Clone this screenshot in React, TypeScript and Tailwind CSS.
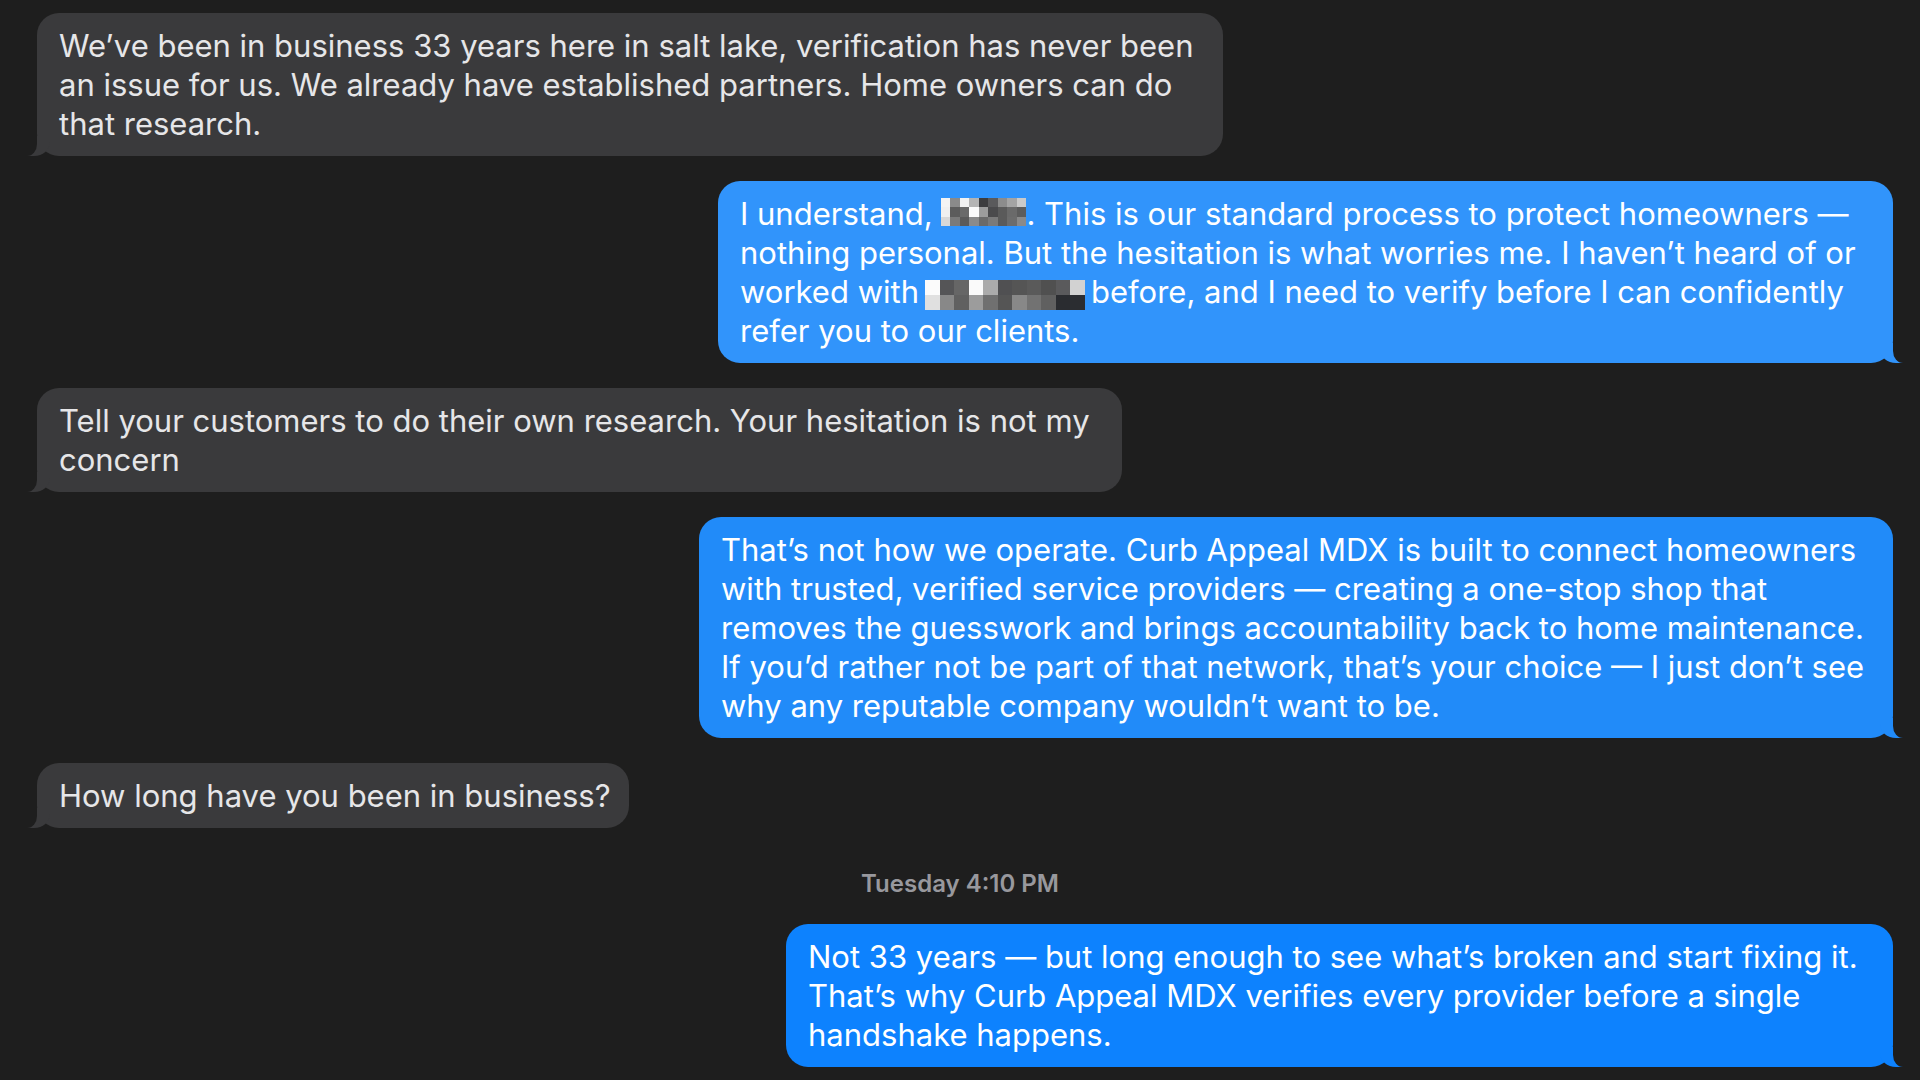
import React from "react"

const mosaicA = [
  ["#f4f4f4", "#8a8a8a", "#f2f2f2", "#b4b4b4", "#3c3c3e", "#5a5a5c", "#8c8c8c", "#a4a4a4", "#cacaca"],
  ["#f0f0f0", "#5c5c5c", "#6a6a6a", "#fafafa", "#9c9c9c", "#4a4a4c", "#5a5a5a", "#6a6a6a", "#5c5c5c"],
  ["#d8d8d8", "#7a7a7a", "#5a5a5a", "#8a8a8a", "#6a6a6a", "#7a7a7a", "#5a5a5a", "#6c6c6c", "#8a8a8a"],
]

const mosaicB = [
  ["#fbfbfb", "#555557", "#666666", "#fafafa", "#ababab", "#505052", "#555555", "#5a5a5a", "#505050", "#5a5a5c", "#d2d2d2"],
  ["#e0e0e0", "#888888", "#606060", "#9c9c9c", "#707070", "#555555", "#888888", "#727272", "#606060", "#2a2c30", "#2b2d31"],
]

function Mosaic({ grid, w, h, className }: { grid: string[][]; w: number; h: number; className: string }) {
  const cols = grid[0].length
  const rows = grid.length
  return (
    <svg
      width={w}
      height={h}
      viewBox={`0 0 ${cols} ${rows}`}
      preserveAspectRatio="none"
      shapeRendering="crispEdges"
      className={className}
    >
      {grid.map((row, y) => row.map((c, x) => <rect key={`${x}-${y}`} x={x} y={y} width={1.02} height={1.02} fill={c} />))}
    </svg>
  )
}

// tails: before = the tail body, after = background cut-out
const inTail =
  "before:content-[''] before:absolute before:bottom-0 before:left-[-10px] before:h-[20px] before:w-[23px] before:bg-[#3a3a3c] before:rounded-br-[16px_14px] after:content-[''] after:absolute after:bottom-0 after:left-[-30px] after:h-[20px] after:w-[30px] after:bg-[#1e1e1e] after:rounded-br-[10px_12px]"

function Incoming({ width, children }: { width: string; children: React.ReactNode }) {
  return (
    <div className={`relative ml-[37px] rounded-[22px] bg-[#3a3a3c] px-[22px] py-[13px] text-[#e6e6e8] whitespace-nowrap ${width} ${inTail}`}>
      {children}
    </div>
  )
}

function Outgoing({ width, tone, children }: { width: string; tone: string; children: React.ReactNode }) {
  return (
    <div className={`relative self-end mr-[27px] rounded-[22px] px-[22px] py-[13px] text-white whitespace-nowrap ${width} ${tone}`}>
      {children}
    </div>
  )
}

export default function App() {
  return (
    <div className="h-screen w-full overflow-hidden bg-[#1e1e1e] pt-[13px] font-['Inter','Noto_Sans',sans-serif] text-[31px] leading-[39px] antialiased">
      <div className="flex flex-col gap-[25px]">
        <Incoming width="w-[1186px]">
          We’ve been in business 33 years here in salt lake, verification has never been
          <br />
          an issue for us. We already have established partners. Home owners can do
          <br />
          that research.
        </Incoming>

        <Outgoing
          width="w-[1175px]"
          tone="bg-[#3194fb] before:content-[''] before:absolute before:bottom-0 before:right-[-10px] before:h-[20px] before:w-[23px] before:bg-[#3194fb] before:rounded-bl-[16px_14px] after:content-[''] after:absolute after:bottom-0 after:right-[-30px] after:h-[20px] after:w-[30px] after:bg-[#1e1e1e] after:rounded-bl-[10px_12px]"
        >
          I understand, <Mosaic grid={mosaicA} w={85} h={28} className="inline-block align-[-1px]" />. This is our standard process to protect homeowners —
          <br />
          nothing personal. But the hesitation is what worries me. I haven’t heard of or
          <br />
          worked with<Mosaic grid={mosaicB} w={160} h={30} className="inline-block align-[-7px] ml-[6px] mr-[6px]" />before, and I need to verify before I can confidently
          <br />
          refer you to our clients.
        </Outgoing>

        <Incoming width="w-[1085px]">
          Tell your customers to do their own research. Your hesitation is not my
          <br />
          concern
        </Incoming>

        <Outgoing
          width="w-[1194px]"
          tone="bg-[#218bf9] before:content-[''] before:absolute before:bottom-0 before:right-[-10px] before:h-[20px] before:w-[23px] before:bg-[#218bf9] before:rounded-bl-[16px_14px] after:content-[''] after:absolute after:bottom-0 after:right-[-30px] after:h-[20px] after:w-[30px] after:bg-[#1e1e1e] after:rounded-bl-[10px_12px]"
        >
          That’s not how we operate. Curb Appeal MDX is built to connect homeowners
          <br />
          with trusted, verified service providers — creating a one-stop shop that
          <br />
          removes the guesswork and brings accountability back to home maintenance.
          <br />
          If you’d rather not be part of that network, that’s your choice — I just don’t see
          <br />
          why any reputable company wouldn’t want to be.
        </Outgoing>

        <Incoming width="w-[592px]">How long have you been in business?</Incoming>

        <div className="mt-[16px] text-center text-[24px] leading-[30px] font-semibold text-[#98989d]">Tuesday 4:10 PM</div>

        <Outgoing
          width="w-[1107px]"
          tone="bg-[#0d82fe] before:content-[''] before:absolute before:bottom-0 before:right-[-10px] before:h-[20px] before:w-[23px] before:bg-[#0d82fe] before:rounded-bl-[16px_14px] after:content-[''] after:absolute after:bottom-0 after:right-[-30px] after:h-[20px] after:w-[30px] after:bg-[#1e1e1e] after:rounded-bl-[10px_12px]"
        >
          Not 33 years — but long enough to see what’s broken and start fixing it.
          <br />
          That’s why Curb Appeal MDX verifies every provider before a single
          <br />
          handshake happens.
        </Outgoing>
      </div>
    </div>
  )
}
